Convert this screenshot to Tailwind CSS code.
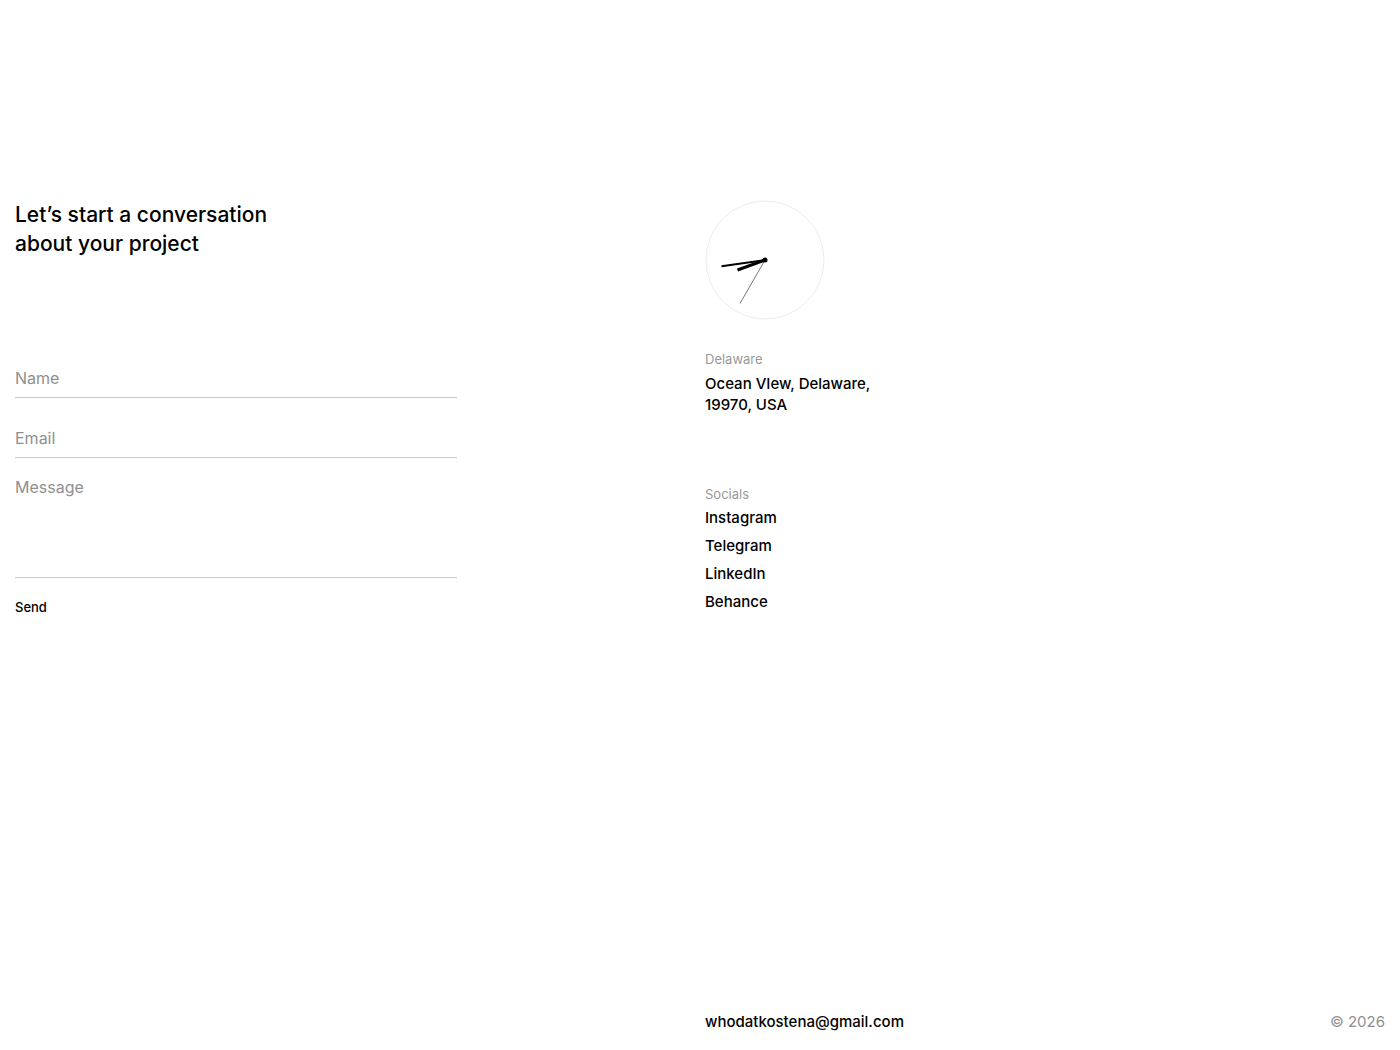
<!DOCTYPE html>
<html lang="en">
<head>
    <meta charset="UTF-8">
    <meta name="viewport" content="width=device-width, initial-scale=1.0">
    <title>Contact</title>
    <script src="https://cdn.jsdelivr.net/npm/@tailwindcss/browser@4"></script>
</head>
<body class="bg-white text-black font-['Inter','Liberation_Sans',sans-serif]">
    <div class="flex min-h-screen flex-col px-[15px] pt-[200px] pb-4">
        <main class="grid grow grid-cols-2 items-start gap-[10px]">
            <!-- Contact form -->
            <section>
                <h1 class="text-[21px] leading-[29px] font-medium">Let’s start a conversation<br>about your project</h1>

                <form class="mt-[100px] flex w-[65%] flex-col gap-5">
                    <input type="text" name="name" aria-label="Name" placeholder="Name" class="h-10 border-b border-[#c8c8c8] outline-none placeholder:text-[#8f8f8f]">
                    <input type="email" name="email" aria-label="Email" placeholder="Email" class="h-10 border-b border-[#c8c8c8] outline-none placeholder:text-[#8f8f8f]">
                    <textarea name="message" aria-label="Message" placeholder="Message" class="h-[100px] resize-none border-b border-[#c8c8c8] leading-[18px] outline-none placeholder:text-[#8f8f8f]"></textarea>
                    <button type="submit" class="self-start text-[13px] leading-[18px] font-medium">Send</button>
                </form>
            </section>

            <!-- Clock, address and socials -->
            <section>
                <svg class="size-[120px]" viewBox="0 0 120 120" fill="none" role="img" aria-label="Clock">
                    <circle cx="60" cy="60" r="59" stroke="#ececec"/>
                    <path d="M60 60 35 103.500" stroke="#777"/>
                    <path d="M60 60 32.500 70" stroke="#000" stroke-width="3"/>
                    <path d="M60 60 16.500 66.300" stroke="#000" stroke-width="2"/>
                    <circle cx="60" cy="60" r="2.500" fill="#000"/>
                </svg>

                <h2 class="mt-[29px] text-[13px] leading-5 text-[#999]">Delaware</h2>
                <address class="mt-1 text-[15px] leading-[21px] font-medium not-italic">Ocean VIew, Delaware,<br>19970, USA</address>

                <h2 class="mt-[69px] text-[13px] leading-5 text-[#999]">Socials</h2>
                <ul class="mt-1 flex flex-col gap-2 text-[15px] leading-5 font-medium">
                    <li><a href="#">Instagram</a></li>
                    <li><a href="#">Telegram</a></li>
                    <li><a href="#">LinkedIn</a></li>
                    <li><a href="#">Behance</a></li>
                </ul>
            </section>
        </main>

        <footer class="grid grid-cols-2 gap-[10px] text-[15px] leading-6">
            <div class="col-start-2 flex justify-between">
                <a href="mailto:whodatkostena@gmail.com" class="font-medium">whodatkostena@gmail.com</a>
                <p class="text-[#8f8f8f]">© 2026</p>
            </div>
        </footer>
    </div>
</body>
</html>
